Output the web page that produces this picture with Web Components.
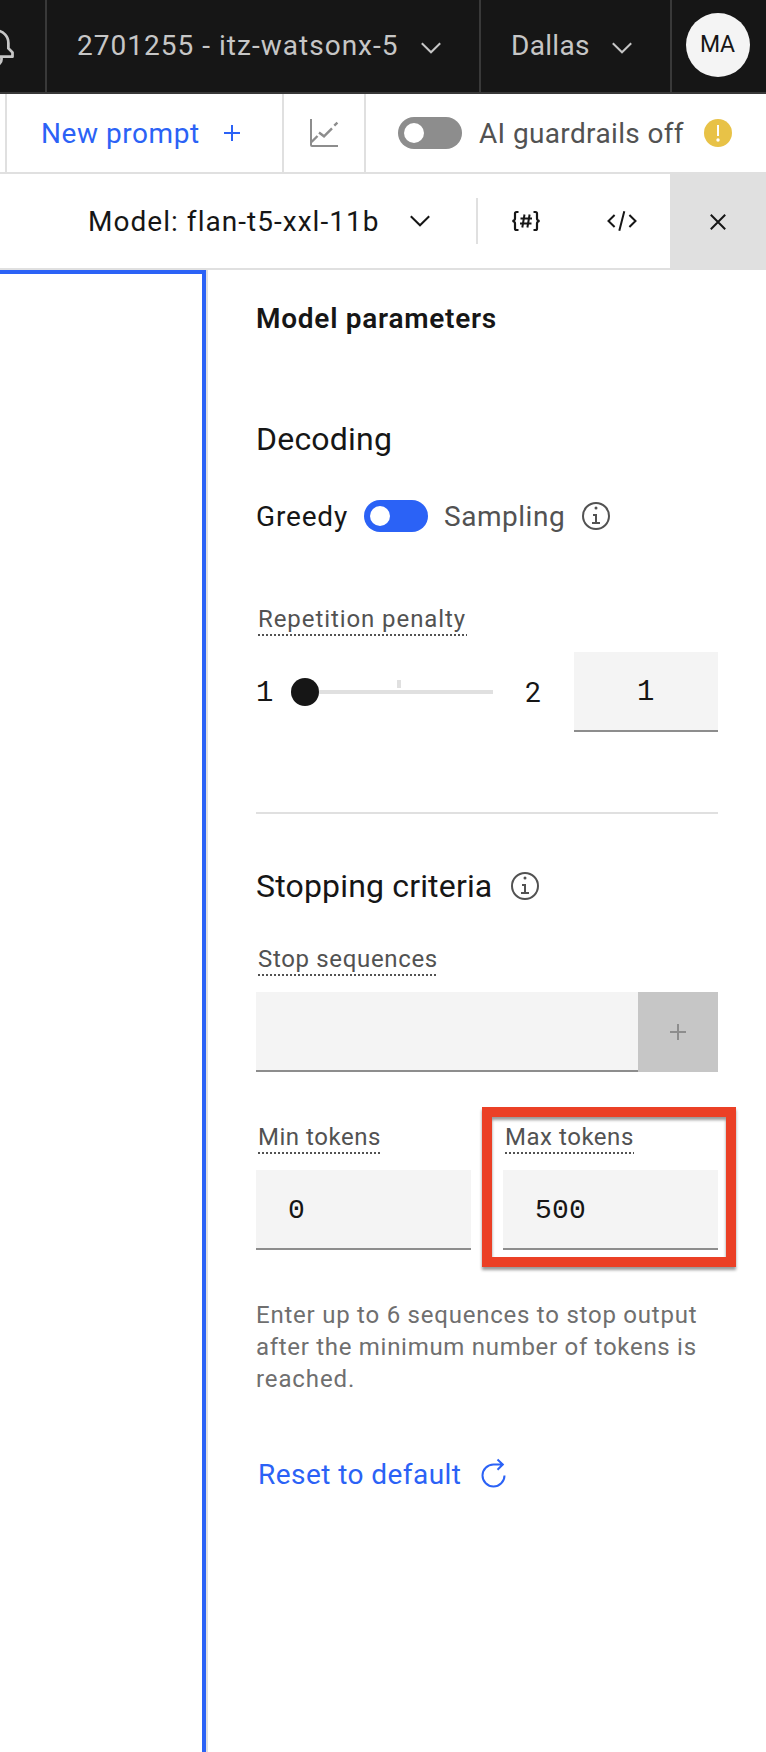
<!DOCTYPE html>
<html lang="en">
<head>
<meta charset="utf-8">
<title>Prompt Lab</title>
<style>
html,body{margin:0;background:#fff}
body{font-family:Roboto,"Open Sans","Liberation Sans",sans-serif;color:#161616}
</style>
</head>
<body>
<prompt-lab></prompt-lab>
<script>
const define = (name, html, after) => {
  const t = document.createElement('template');
  t.innerHTML = html;
  customElements.define(name, class extends HTMLElement {
    connectedCallback() {
      if (this.shadowRoot) return;
      this.attachShadow({mode: 'open'}).appendChild(t.content.cloneNode(true));
      if (after) after(this);
    }
  });
};

/* A single line of text tracked out so that its ink fills the given width. */
const pen = document.createElement('canvas').getContext('2d');
define('ui-text', `<style>
:host{display:block;flex:none;height:32px;white-space:nowrap;line-height:32px;font-size:28px}
span{display:block;font-variant-ligatures:none}
</style><span><slot></slot></span>`, el => {
  const w = +el.getAttribute('w');
  const size = +(el.getAttribute('size') || 28);
  const weight = el.getAttribute('weight') || 400;
  const mono = el.hasAttribute('mono');
  const family = mono ? '"Liberation Mono",monospace' : 'Roboto,"Open Sans",sans-serif';
  const text = el.textContent;
  pen.font = `${weight} ${size}px ${family}`;
  pen.letterSpacing = '0.01px';
  const m = pen.measureText(text);
  const ink = m.actualBoundingBoxRight + m.actualBoundingBoxLeft;
  const span = el.shadowRoot.querySelector('span');
  el.style.width = w + 'px';
  span.style.font = `${weight} ${size}px/32px ${family}`;
  span.style.fontVariantLigatures = 'none';
  span.style.paddingTop = (mono ? 2 : size === 28 ? 1 : 0) + 'px';
  span.style.marginLeft = m.actualBoundingBoxLeft + 'px';
  if (text.length > 1) span.style.letterSpacing = ((w - ink) / (text.length - 1)).toFixed(3) + 'px';
});

const icons = {
  chevron: [20, 12, '<path d="M.8 1.2 10 10.3 19.2 1.2"/>'],
  plus: [16, 16, '<path d="M8 0V16M0 8H16"/>'],
  close: [16, 16, '<path d="M.8.8 15.2 15.2M15.2.8.8 15.2"/>'],
  chart: [28, 28, '<path d="M1 0V26Q1 27 2 27H28"/><path stroke-width="2.4" d="M1.500 23 7.500 17M9 13.500 14 17.300 22 9.300M24.300 6.600 27.400 3.600"/>'],
  tokens: [28, 20, '<path stroke-width="2.200" d="M6.500 1H4.500Q3 1 3 2.500V7.500Q3 9.500 .5 10 3 10.500 3 12.500V17.500Q3 19 4.500 19H6.500M21.500 1H23.500Q25 1 25 2.500V7.500Q25 9.500 27.500 10 25 10.500 25 12.500V17.500Q25 19 23.500 19H21.500"/><path d="M12.500 3.500 10.300 16.500M17.600 3.500 15.400 16.500M8.500 7.500H20M8 12.500H19.500"/>'],
  code: [30, 20, '<path d="M7.600 4 1.500 10 7.600 16M22.400 4 28.500 10 22.400 16M17.300.3 12.300 19.700"/>'],
  info: [32, 32, '<circle cx="16" cy="16" r="13"/><path fill="currentColor" stroke="none" d="M17 22V14H13V16H15V22H12V24H20V22Z"/><circle cx="16" cy="8" r="1.5" fill="currentColor" stroke="none"/>'],
  warning: [28, 28, '<circle cx="14" cy="14" r="14" fill="#e8c247" stroke="none"/><path stroke="#fff" d="M14 6V17"/><circle cx="14" cy="21" r="1.7" fill="#fff" stroke="none"/>'],
  reset: [26, 30, '<path d="M23.500 17.500A11 11 0 1 1 12.500 6.500H22.500M16.500 1.500 21.800 6.500 16.500 11.700"/>'],
  bell: [44, 44, '<path fill="currentColor" stroke="none" transform="scale(1.375)" d="M28.707 19.293 26 16.586V13a10.014 10.014 0 0 0-9-9.949V1H15V3.051A10.014 10.014 0 0 0 6 13v3.586L3.293 19.293A1 1 0 0 0 3 20v3a1 1 0 0 0 1 1h7v.777a5.152 5.152 0 0 0 4.500 5.199A5.006 5.006 0 0 0 21 25V24h7a1 1 0 0 0 1-1V20A1 1 0 0 0 28.707 19.293ZM19 25a3 3 0 0 1-6 0V24h6Zm8-3H5V20.414L7.707 17.707A1 1 0 0 0 8 17V13a8 8 0 0 1 16 0v4a1 1 0 0 0 .293.707L27 20.414Z"/>']
};
define('ui-icon', `<style>:host{display:block;flex:none}svg{display:block;overflow:visible}</style><div></div>`, el => {
  const [w, h, body] = icons[el.getAttribute('name')];
  el.shadowRoot.querySelector('div').innerHTML =
    `<svg width="${w}" height="${h}" viewBox="0 0 ${w} ${h}" fill="none" stroke="currentColor" stroke-width="2">${body}</svg>`;
});

define('ui-toggle', `<style>
:host{display:flex;flex:none;box-sizing:border-box;width:64px;height:32px;border-radius:16px;padding:6px;background:var(--track,#8d8d8d)}
i{width:20px;height:20px;border-radius:50%;background:#fff}
</style><i></i>`);

/* Field label with a dotted rule below it. */
define('ui-label', `<style>
:host{display:block;box-sizing:border-box;height:38px;color:#525252}
div{box-sizing:border-box;height:38px;width:var(--rule);padding-top:5px;
 background:repeating-linear-gradient(90deg,#525252 0 2px,transparent 2px 4px) 0 100%/100% 2px no-repeat}
</style><div><slot></slot></div>`);

define('ui-field', `<style>
:host{display:flex;flex:none;box-sizing:border-box;height:80px;align-items:center;background:#f4f4f4;border-bottom:2px solid #8d8d8d}
</style><slot></slot>`);

define('app-header', `<style>
:host{display:flex;box-sizing:border-box;height:94px;background:#161616;border-bottom:2px solid #393939;color:#c6c6c6}
div{display:flex;box-sizing:border-box;height:92px;align-items:center;border-left:2px solid #393939;padding-bottom:2px}
.bell{width:45px;border:0;overflow:hidden}.bell ui-icon{margin:4px 0 0 -25.900px}
.account{width:434px;padding-left:31px;gap:24px}.region{width:191px;padding-left:32px;gap:24px}
.user{flex:1;padding-left:14px}ui-icon{margin-top:6px}
b{display:flex;width:64px;height:64px;border-radius:50%;background:#f4f4f4;color:#161616;align-items:center;justify-content:center}
</style>
<div class="bell"><ui-icon name="bell"></ui-icon></div>
<div class="account"><ui-text w="319">2701255 - itz-watsonx-5</ui-text><ui-icon name="chevron"></ui-icon></div>
<div class="region"><ui-text w="76">Dallas</ui-text><ui-icon style="margin-left:-1px" name="chevron"></ui-icon></div>
<div class="user"><b><ui-text w="34" size="23">MA</ui-text></b></div>`);

define('app-toolbar', `<style>
:host{display:flex;box-sizing:border-box;height:80px;border-bottom:2px solid #e0e0e0;padding-left:5px}
div{display:flex;box-sizing:border-box;height:78px;align-items:center;border-left:2px solid #e0e0e0}
.new{width:277px;padding-left:36px;gap:25px;color:#2b62f6}
.chart{width:82px;padding-left:26px;color:#8d8d8d}
.guard{flex:1;padding-left:32px;color:#525252}
.guard ui-text{margin:0 20px 0 17px}
</style>
<div class="new"><ui-text w="156">New prompt</ui-text><ui-icon name="plus"></ui-icon></div>
<div class="chart"><ui-icon name="chart"></ui-icon></div>
<div class="guard"><ui-toggle></ui-toggle><ui-text w="205">AI guardrails off</ui-text><ui-icon name="warning"></ui-icon></div>`);

define('model-bar', `<style>
:host{display:flex;box-sizing:border-box;height:96px;border-bottom:2px solid #e0e0e0;align-items:center;padding-left:90px}
.sep{width:2px;height:46px;background:#e0e0e0;margin:0 34px 0 46px}
.chev{margin-left:32px}.code{margin:0 33px 0 67px}
.close{display:flex;flex:1;height:96px;margin-bottom:-2px;background:#e0e0e0;align-items:center;padding-left:40px}
</style>
<ui-text w="288">Model: flan-t5-xxl-11b</ui-text><ui-icon class="chev" name="chevron"></ui-icon>
<div class="sep"></div>
<ui-icon name="tokens"></ui-icon><ui-icon class="code" name="code"></ui-icon>
<div class="close"><ui-icon name="close"></ui-icon></div>`);

define('range-slider', `<style>
:host{display:flex;flex:none;width:202px;height:28px;align-items:center}
i{width:28px;height:28px;border-radius:50%;background:#161616}
.track{flex:1;height:4px;background:#e0e0e0}
.track::before{content:"";display:block;width:4px;height:8px;margin:-10px 0 0 78px;background:#e0e0e0}
</style><i></i><div class="track"></div>`);

define('model-parameters', `<style>
:host{display:block;box-sizing:border-box;flex:1;padding:32px 48px 0 48px;border-left:2px solid #e0e0e0}
.row{display:flex;align-items:center}
ui-label ui-text{margin-left:1px}
.gray{color:#525252}
ui-icon[name=info]{color:#525252}
.rep{height:80px;margin-top:16px}
.rule{height:2px;background:#e0e0e0;margin-top:80px}
.add{display:flex;width:80px;height:80px;background:#c6c6c6;color:#8d8d8d;align-items:center;justify-content:center}
.tokens{display:flex;gap:32px;margin-top:44px}
.col{width:215px}
.col ui-label{margin-left:2px}
.col ui-field{margin-top:16px;padding-left:33px}
.max{position:relative}
.mark{position:absolute;left:-21px;top:-9px;width:254px;height:160px;box-sizing:border-box;border:10px solid #eb4026;filter:drop-shadow(0 3px 1.500px rgba(0,0,0,.4))}
.help{color:#6f6f6f;margin:49px 0 0 1px}
.reset{color:#2b62f6;margin:63px 0 0 4px;height:32px}
</style>
<ui-text style="margin-left:1px" w="239" weight="600">Model parameters</ui-text>
<ui-text style="margin:89px 0 0 2px" w="132" size="32">Decoding</ui-text>
<div class="row" style="margin:45px 0 0 1px;height:32px">
 <ui-text w="90">Greedy</ui-text><ui-toggle style="--track:#2b62f6;margin:0 17px 0 17px"></ui-toggle>
 <ui-text class="gray" w="118">Sampling</ui-text><ui-icon style="margin-left:17px" name="info"></ui-icon>
</div>
<ui-label style="margin:66px 0 0 2px;--rule:209px"><ui-text w="207" size="24">Repetition penalty</ui-text></ui-label>
<div class="row rep">
 <ui-text style="margin-left:2px" mono w="14" size="29">1</ui-text><range-slider style="margin-left:19px"></range-slider>
 <ui-text style="margin-left:33px" w="14">2</ui-text>
 <ui-field style="width:144px;margin-left:34px;padding-left:65px"><ui-text mono w="15" size="29">1</ui-text></ui-field>
</div>
<div class="rule"></div>
<div class="row" style="margin:56px 0 0 1px;height:32px">
 <ui-text w="234" size="32">Stopping criteria</ui-text><ui-icon style="margin-left:18px" name="info"></ui-icon>
</div>
<ui-label style="margin:36px 0 0 2px;--rule:180px"><ui-text style="margin-left:0" w="179" size="24">Stop sequences</ui-text></ui-label>
<div class="row" style="margin-top:16px"><ui-field style="width:382px"></ui-field><div class="add"><ui-icon name="plus"></ui-icon></div></div>
<div class="tokens">
 <div class="col"><ui-label style="--rule:124px"><ui-text w="121" size="24">Min tokens</ui-text></ui-label><ui-field><ui-text mono w="14">0</ui-text></ui-field></div>
 <div class="col max"><ui-label style="--rule:129px"><ui-text w="127" size="24">Max tokens</ui-text></ui-label><ui-field><ui-text mono w="49">500</ui-text></ui-field><div class="mark"></div></div>
</div>
<div class="help">
 <ui-text w="440" size="24">Enter up to 6 sequences to stop output</ui-text>
 <ui-text w="439" size="24">after the minimum number of tokens is</ui-text>
 <ui-text w="96" size="24">reached.</ui-text>
</div>
<div class="row reset"><ui-text w="201">Reset to default</ui-text><ui-icon style="margin:-2px 0 0 20px" name="reset"></ui-icon></div>`);

define('prompt-lab', `<style>
:host{display:flex;flex-direction:column;width:766px;height:1752px;overflow:hidden;background:#fff}
main{display:flex;flex:1;min-height:0}
.editor{box-sizing:border-box;width:206px;border:4px solid #2b62f6;border-left:0;border-bottom:0}
</style>
<app-header></app-header><app-toolbar></app-toolbar><model-bar></model-bar>
<main><div class="editor"></div><model-parameters></model-parameters></main>`);
</script>
</body>
</html>
